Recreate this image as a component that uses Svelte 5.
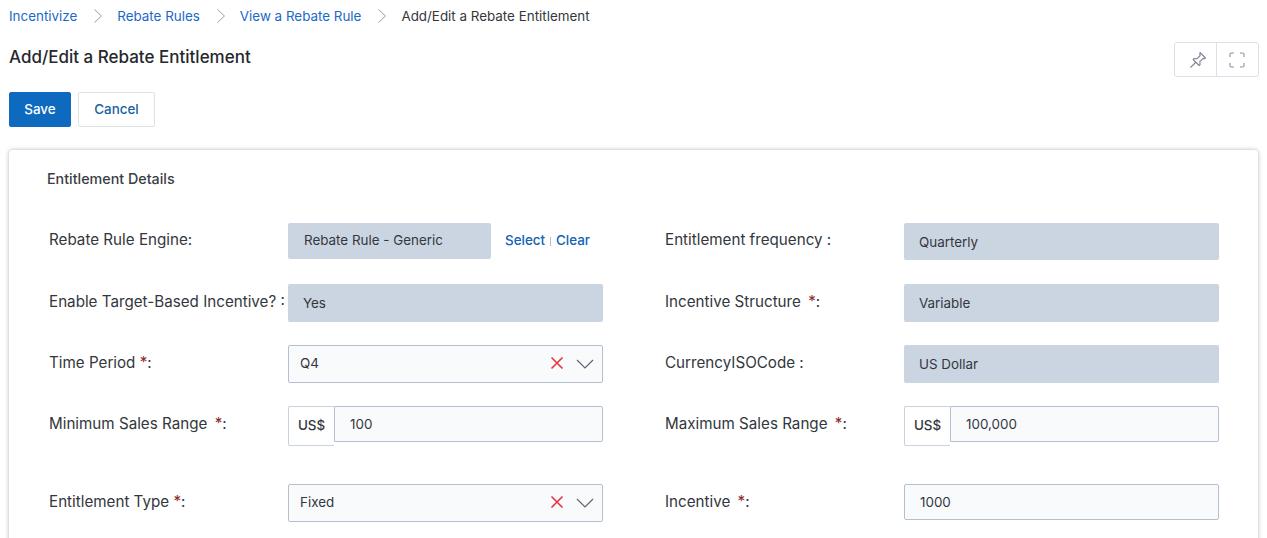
<script>
	const crumbs = ['Incentivize', 'Rebate Rules', 'View a Rebate Rule'];
</script>

{#snippet cross()}
	<svg class="x" width="14" height="14" viewBox="0 0 14 14"><path d="M1.500 1.500l11 11M12.500 1.500l-11 11" stroke="#e5343d" stroke-width="1.600" fill="none" /></svg>
{/snippet}

{#snippet chevron()}
	<svg class="chev" width="18" height="10" viewBox="0 0 18 10"><path d="M1 1l8 8 8-8" stroke="#5f6772" stroke-width="1.200" fill="none" /></svg>
{/snippet}

<div class="page">
	<nav class="crumbs">
		{#each crumbs as c}
			<a href="#top">{c}</a>
			<svg width="10" height="16" viewBox="0 0 10 16"><path d="M1.500 1.500l7 6.500-7 6.500" stroke="#9aa0a8" stroke-width="1" fill="none" /></svg>
		{/each}
		<span>Add/Edit a Rebate Entitlement</span>
	</nav>

	<div class="head">
		<h1>Add/Edit a Rebate Entitlement</h1>
		<div class="tools">
			<button class="pin" aria-label="Pin">
				<svg width="18" height="18" viewBox="0 0 18 18" fill="none" stroke="#7d8590" stroke-width="1.100"><path d="M11 1.500l5.500 5.500-1.200.8-1.200-.4-3.300 3.300.3 2.800-1 1-3-3-3-3 1-1 2.800.3 3.300-3.300-.4-1.200z" stroke-linejoin="round" /><path d="M7 11l-5.500 5.500" /></svg>
			</button>
			<button class="full" aria-label="Fullscreen">
				<svg width="16" height="16" viewBox="0 0 16 16" fill="none" stroke="#8b929c" stroke-width="1.100"><path d="M1 5V2.500A1.500 1.500 0 0 1 2.500 1H5M11 1h2.500A1.500 1.500 0 0 1 15 2.500V5M15 11v2.500a1.500 1.500 0 0 1-1.500 1.500H11M5 15H2.500A1.500 1.500 0 0 1 1 13.500V11" /></svg>
			</button>
		</div>
	</div>

	<div class="actions">
		<button class="save">Save</button>
		<button class="cancel">Cancel</button>
	</div>

	<section class="card">
		<h2>Entitlement Details</h2>
		<div class="form">
			<div class="row r1">
				<div class="field">
					<label>Rebate Rule Engine:</label>
					<div class="lookup">
						<div class="ro short">Rebate Rule - Generic</div>
						<a href="#top">Select</a><i></i><a href="#top">Clear</a>
					</div>
				</div>
				<div class="field">
					<label>Entitlement frequency :</label>
					<div class="ro">Quarterly</div>
				</div>
			</div>

			<div class="row">
				<div class="field">
					<label>Enable Target-Based Incentive? :</label>
					<div class="ro">Yes</div>
				</div>
				<div class="field">
					<label>Incentive Structure <b class="wide">*</b>:</label>
					<div class="ro">Variable</div>
				</div>
			</div>

			<div class="row">
				<div class="field">
					<label>Time Period <b>*</b>:</label>
					<div class="select">
						<span>Q4</span>
						{@render cross()}
						{@render chevron()}
					</div>
				</div>
				<div class="field">
					<label>CurrencyISOCode :</label>
					<div class="ro">US Dollar</div>
				</div>
			</div>

			<div class="row r4">
				<div class="field">
					<label>Minimum Sales Range <b class="wide">*</b>:</label>
					<div class="money">
						<span class="unit">US$</span>
						<div class="val">100</div>
					</div>
				</div>
				<div class="field">
					<label>Maximum Sales Range <b class="wide">*</b>:</label>
					<div class="money">
						<span class="unit">US$</span>
						<div class="val">100,000</div>
					</div>
				</div>
			</div>

			<div class="row">
				<div class="field">
					<label>Entitlement Type <b>*</b>:</label>
					<div class="select">
						<span>Fixed</span>
						{@render cross()}
						{@render chevron()}
					</div>
				</div>
				<div class="field">
					<label>Incentive <b class="wide">*</b>:</label>
					<div class="val solo">1000</div>
				</div>
			</div>
		</div>
	</section>
</div>

<style>
	:global(body) {
		margin: 0;
		background: #fff;
		overflow: hidden;
	}

	.page {
		height: 538px;
		overflow: hidden;
		padding: 0 8px 0 9px;
		font-family: Inter, "Liberation Sans", sans-serif;
		font-size: 15.200px;
		color: #33373d;
	}

	a {
		color: #0f62b5;
		text-decoration: none;
	}

	.crumbs {
		display: flex;
		align-items: center;
		height: 32px;
		font-size: 13.400px;
	}

	.crumbs a {
		color: #1c68c9;
	}

	.crumbs svg {
		margin: 0 14px 0 16px;
	}

	.crumbs span {
		color: #33373d;
	}

	.head {
		display: flex;
		justify-content: space-between;
		align-items: flex-start;
		height: 34px;
		margin-top: 9px;
	}

	h1 {
		margin: 0;
		font-size: 17px;
		line-height: 32px;
		font-weight: 500;
		color: #25282c;
	}

	.tools {
		display: flex;
		border: 1px solid #dde1e7;
		border-radius: 3px;
		background: #fff;
		margin: 1px 0 0;
	}

	.tools button {
		display: flex;
		align-items: center;
		justify-content: center;
		box-sizing: border-box;
		width: 42px;
		height: 33px;
		padding: 0;
		border: 0;
		background: none;
	}

	.tools .pin {
		width: 41px;
		padding-left: 5px;
	}

	.tools .full {
		padding-right: 2px;
		border-left: 1px solid #dde1e7;
	}

	.actions {
		display: flex;
		gap: 7px;
		margin-top: 17px;
	}

	.actions button {
		height: 35px;
		padding: 0 0 2px;
		border-radius: 2px;
		font: 500 13.400px Inter, "Liberation Sans", sans-serif;
	}

	.save {
		width: 62px;
		background: #0e6abf;
		border: 1px solid #0e6abf;
		color: #fff;
	}

	.cancel {
		width: 77px;
		background: #fff;
		border: 1px solid #dde1e9;
		color: #1a5f9f;
	}

	.card {
		width: 1249px;
		box-sizing: border-box;
		margin-top: 23px;
		height: 420px;
		border-radius: 4px;
		background: #fff;
		box-shadow: 0 0 4px rgba(60, 70, 90, 0.4);
		padding: 21px 38px 0 38px;
	}

	h2 {
		margin: 0;
		font-size: 14.300px;
		line-height: 16px;
		font-weight: 500;
		color: #3a3e45;
	}

	.form {
		margin-top: 36px;
		padding-left: 2px;
		display: flex;
		flex-direction: column;
		gap: 23px;
	}

	.row {
		display: grid;
		grid-template-columns: 554px 554px;
		column-gap: 62px;
		min-height: 38px;
	}

	.r1 {
		margin-bottom: 1px;
		min-height: 37px;
	}

	.r4 {
		margin-bottom: 15px;
		min-height: 40px;
	}

	.field {
		display: flex;
		align-items: flex-start;
	}

	label {
		width: 239px;
		flex-shrink: 0;
		line-height: 36px;
		color: #33373d;
		white-space: nowrap;
	}

	.r1 label {
		line-height: 34px;
	}

	b {
		font-weight: 400;
		color: #8f2a2e;
	}

	b.wide {
		margin-left: 3px;
	}

	.ro {
		box-sizing: border-box;
		width: 315px;
		height: 38px;
		padding: 0 15px;
		line-height: 38px;
		background: #cbd5e1;
		border-radius: 2px;
		font-size: 13.400px;
	}

	.r1 .ro {
		height: 37px;
		line-height: 38px;
	}

	.lookup {
		display: flex;
		align-items: center;
		height: 36px;
		font-size: 13.400px;
		font-weight: 500;
	}

	.r1 .ro.short {
		width: 203px;
		height: 36px;
		line-height: 35px;
		padding: 0 16px;
		font-weight: 400;
		margin-right: 14px;
	}

	.lookup a {
		position: relative;
		top: -1px;
	}

	.lookup i {
		width: 1px;
		height: 9px;
		background: #b8bec6;
		margin: 0 5px;
	}

	.select {
		box-sizing: border-box;
		display: flex;
		align-items: center;
		width: 315px;
		height: 38px;
		padding: 0 8px 0 11px;
		background: #f8fafc;
		border: 1px solid #b4c0d0;
		border-radius: 2px;
		font-size: 13.400px;
	}

	.select span {
		flex: 1;
		margin-top: -3px;
	}

	.x {
		margin-right: 12px;
		margin-top: -2px;
	}

	.chev {
		margin-top: -1px;
	}

	.money {
		display: flex;
		align-items: flex-start;
		width: 315px;
	}

	.unit {
		box-sizing: border-box;
		width: 46px;
		height: 40px;
		line-height: 36px;
		text-align: center;
		font-size: 13.400px;
		font-weight: 500;
		border: 1px solid #c9d2de;
		border-right: 0;
		border-radius: 2px 0 0 2px;
		background: #fff;
	}

	.val {
		box-sizing: border-box;
		flex: 1;
		height: 36px;
		line-height: 34px;
		padding: 0 15px;
		font-size: 13.400px;
		background: #f8fafc;
		border: 1px solid #b4c0d0;
		border-radius: 0 2px 2px 0;
	}

	.val.solo {
		flex: none;
		width: 315px;
		border-radius: 2px;
	}
</style>
